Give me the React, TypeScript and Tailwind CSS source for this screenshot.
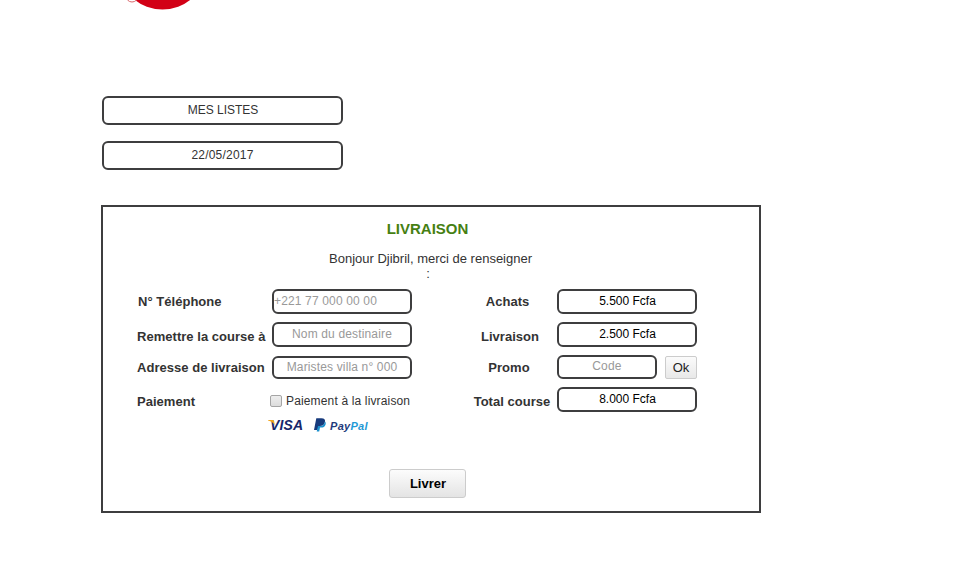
import type { ReactNode } from "react";

const box = "box-border shrink-0 rounded-[6px] border-2 border-[#3e3e3f] bg-white text-center text-[12px]";

function Label({ className, children }: { className: string; children: ReactNode }) {
  return <div className={`h-5 whitespace-nowrap text-[13px] font-bold leading-5 tracking-[0.03px] ${className}`}>{children}</div>;
}

function Logo() {
  return (
    <svg className="block" width="100" height="14" viewBox="0 0 100 14" role="img" aria-label="logo">
      <ellipse cx="62.5" cy="-27" rx="41" ry="36.5" fill="#d20016" />
      <circle cx="32" cy="-4" r="6" fill="white" stroke="#d9676c" strokeWidth="1" />
    </svg>
  );
}

function PaymentLogos() {
  return (
    <div className="flex h-4 items-center font-['Liberation_Sans',Arial,sans-serif] font-bold italic">
      <div className="relative h-4 w-[46px]">
        <span className="absolute left-[2px] top-0 text-[14px] leading-4 tracking-[0.15px] text-[#16276b]">VISA</span>
        <svg className="absolute left-0 top-[3px]" width="8" height="6" viewBox="0 0 8 6">
          <path d="M0 0h4.6q1.2 0 1.5 1.2L6.9 5.4Q4.8 1.6 0 .6Z" fill="#f2a51b" />
        </svg>
      </div>
      <svg width="12" height="14" viewBox="0 0 12 14">
        <path d="M2.3.3h5.1c3 0 4.1 1.6 3.5 4-.6 2.7-2.5 3.8-5.1 3.8H4.5L3.6 12H0Z" fill="#173a7c" />
        <path d="M11 3.4c1 1 .9 2.1.5 3.3-.6 2-2.2 2.8-4.3 2.8H6l-.8 3.9H2.7L4 8.1h1.8c2.9 0 4.7-1.5 5.2-4.7Z" fill="#1c91ce" />
      </svg>
      <span className="ml-[4px] mt-px text-[11px] leading-4 tracking-[0.3px] text-[#243b7c]">
        Pay<span className="text-[#1f9ad6]">Pal</span>
      </span>
    </div>
  );
}

export default function App() {
  return (
    <main className="h-[575px] w-[959px] overflow-hidden bg-white font-['Liberation_Sans',Arial,sans-serif] text-[#333333]">
      <header className="h-24 pl-[100px]"><Logo /></header>

      <div className="ml-[102px] flex w-[241px] flex-col gap-4">
        <div className={`${box} h-[29px] pl-px leading-[24px]`}>MES LISTES</div>
        <div className={`${box} h-[29px] leading-[24px] tracking-[0.2px]`}>22/05/2017</div>
      </div>

      <section className="ml-[101px] mt-[35px] h-[308px] w-[660px] border-2 border-[#3e3e3f]">
        <h1 className="mr-[7px] mt-[12px] h-5 text-center text-[15px] font-bold leading-5 text-[#467f13]">LIVRAISON</h1>
        <p className="ml-[226px] mt-[12px] w-[204px] whitespace-nowrap text-[13px] leading-[15px]">Bonjour Djibril, merci de renseigner</p>
        <p className="mr-[6px] text-center text-[13px] leading-[15px]">:</p>

        <form className="mt-[8px] flex h-[180px] flex-col" onSubmit={(e) => e.preventDefault()}>
          <div className="flex h-[180px] pl-[34px]">
            <div className="flex w-[135px] flex-col pt-[3px]">
              <Label className="pl-px">N° Téléphone</Label>
              <Label className="mt-[15px]">Remettre la course à</Label>
              <Label className="mt-[11px]">Adresse de livraison</Label>
              <Label className="mt-[14px]">Paiement</Label>
            </div>
            <div className="flex w-[140px] flex-col">
              <div className={`${box} h-[25px] text-left leading-[20px] tracking-[0.15px] text-[#999999]`}>+221 77 000 00 00</div>
              <div className={`${box} mt-2 h-[25px] leading-[20px] tracking-[0.15px] text-[#999999]`}>Nom du destinaire</div>
              <div className={`${box} mt-[9px] h-[23px] leading-[18px] tracking-[0.15px] text-[#999999]`}>Maristes villa n° 000</div>
              <label className="-ml-[2px] mt-[13px] flex h-[18px] items-center whitespace-nowrap text-[12px] tracking-[0.15px]">
                <input type="checkbox" className="mr-1 h-3 w-3 shrink-0 appearance-none rounded-[2px] border border-[#a5a5a5] bg-linear-to-b from-[#eeeeee] to-[#dcdcdc]" />
                Paiement à la livraison
              </label>
              <div className="-ml-[4px] mt-[7px]"><PaymentLogos /></div>
            </div>
            <div className="ml-[59px] flex w-[82px] flex-col pt-[3px] text-center">
              <Label className="pr-[9px]">Achats</Label>
              <Label className="mt-[15px] pr-[4px]">Livraison</Label>
              <Label className="mt-[11px] pr-[6px]">Promo</Label>
              <Label className="mt-[14px]">Total course</Label>
            </div>
            <div className="ml-[4px] flex w-[140px] flex-col text-black">
              <div className={`${box} h-[25px] pl-px leading-[20px]`}>5.500 Fcfa</div>
              <div className={`${box} mt-2 h-[25px] pl-px leading-[20px]`}>2.500 Fcfa</div>
              <div className="mt-2 flex h-6 gap-2">
                <div className={`${box} h-6 w-[100px] leading-[18px] tracking-[0.2px] text-[#999999]`}>Code</div>
                <button className="mt-px h-[23px] w-8 rounded-[2px] border border-[#cccccc] bg-linear-to-b from-[#fbfbfb] to-[#e8e8e8] text-[13px] leading-[21px] text-[#222222]">Ok</button>
              </div>
              <div className={`${box} mt-2 h-[25px] pl-px leading-[20px]`}>8.000 Fcfa</div>
            </div>
          </div>
        </form>
        <button className="ml-[286px] block h-[29px] w-[77px] rounded-[3px] border border-[#cccccc] bg-linear-to-b from-[#fcfcfc] to-[#e4e4e4] pl-px text-[13px] font-bold leading-[27px] text-black">Livrer</button>
      </section>
    </main>
  );
}
